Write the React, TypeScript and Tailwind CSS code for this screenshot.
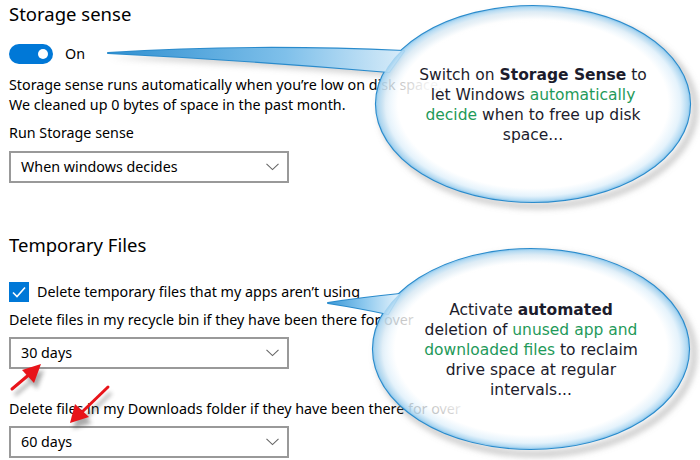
import React from "react";

function Chevron() {
  return (
    <svg width="13" height="8" viewBox="0 0 13 8" className="shrink-0">
      <path d="M0.5 0.8 L6.5 6.6 L12.5 0.8" fill="none" stroke="#666" strokeWidth="1.1" />
    </svg>
  );
}

function Dropdown({ label }: { label: string }) {
  return (
    <div className="w-[280px] h-[32px] border-2 border-[#999] bg-white flex items-center justify-between pl-[10px] pr-[8px]">
      <span className="text-[14.3px] text-black leading-none">{label}</span>
      <Chevron />
    </div>
  );
}

function Overlay() {
  return (
    <svg className="absolute left-0 top-0 pointer-events-none" width="700" height="460" viewBox="0 0 700 460">
      <defs>
        <radialGradient id="bfill" cx="0.5" cy="0.5" r="0.5">
          <stop offset="0" stopColor="#ffffff" stopOpacity="1" />
          <stop offset="0.7" stopColor="#ffffff" stopOpacity="0.95" />
          <stop offset="0.86" stopColor="#ffffff" stopOpacity="0.78" />
          <stop offset="0.94" stopColor="#dff0fb" stopOpacity="0.82" />
          <stop offset="1" stopColor="#9ccfef" stopOpacity="0.95" />
        </radialGradient>
        <linearGradient id="tail1" x1="0" y1="0" x2="1" y2="0">
          <stop offset="0" stopColor="#2f8fd0" />
          <stop offset="0.6" stopColor="#7fc0ea" />
          <stop offset="1" stopColor="#d8ecf9" />
        </linearGradient>
        <linearGradient id="tail2" x1="0" y1="0" x2="1" y2="0">
          <stop offset="0" stopColor="#3b98d6" />
          <stop offset="0.5" stopColor="#8cc8ee" />
          <stop offset="1" stopColor="#e6f3fc" />
        </linearGradient>
        <filter id="blur" x="-20%" y="-20%" width="140%" height="140%">
          <feGaussianBlur stdDeviation="3" />
        </filter>
        <filter id="ablur" x="-50%" y="-50%" width="200%" height="200%">
          <feGaussianBlur stdDeviation="2" />
        </filter>
      </defs>

      {/* Bubble 1 */}
      <ellipse cx="538" cy="109" rx="157" ry="97" fill="none" stroke="#888" strokeOpacity="0.55" strokeWidth="5" filter="url(#blur)" />
      <path d="M108 53 Q250 44 402 51 L392 72 Q250 60 108 53 Z" fill="#888" opacity="0.35" transform="translate(2,5)" filter="url(#blur)" />
      <path d="M108 53 Q250 44 404 51 L389 72 Q250 60 108 53 Z" fill="none" stroke="#2a8bcc" strokeWidth="2.2" strokeLinejoin="round" />
      <ellipse cx="533" cy="104" rx="157" ry="98" fill="none" stroke="#2a8bcc" strokeWidth="2.2" />
      <path d="M108 53 Q250 44 404 51 L389 72 Q250 60 108 53 Z" fill="url(#tail1)" />
      <ellipse cx="533" cy="104" rx="157" ry="98" fill="url(#bfill)" />

      {/* Bubble 2 */}
      <ellipse cx="536" cy="354" rx="158" ry="100" fill="none" stroke="#888" strokeOpacity="0.55" strokeWidth="5" filter="url(#blur)" />
      <path d="M328 303 Q360 298 400 294 L388 314 Q360 308 328 303 Z" fill="none" stroke="#2a8bcc" strokeWidth="2.2" strokeLinejoin="round" />
      <ellipse cx="531" cy="349" rx="158" ry="100" fill="none" stroke="#2a8bcc" strokeWidth="2.2" />
      <path d="M328 303 Q360 298 400 294 L388 314 Q360 308 328 303 Z" fill="url(#tail2)" />
      <ellipse cx="531" cy="349" rx="158" ry="100" fill="url(#bfill)" />

      {/* Red arrows */}
      <g opacity="0.45" transform="translate(3,6)" filter="url(#ablur)">
        <path d="M12 389 L31 373" stroke="#444" strokeWidth="3" />
        <path d="M41 364 L22 370 L34 383 Z" fill="#444" />
        <path d="M108 387 L81 413" stroke="#444" strokeWidth="3" />
        <path d="M70 423 L75 404 L89 417 Z" fill="#444" />
      </g>
      <path d="M12 389 L31 373" stroke="#e8141a" strokeWidth="3" strokeLinecap="round" />
      <path d="M41 364 L22 370 L34 383 Z" fill="#e8141a" />
      <path d="M108 387 L81 413" stroke="#e8141a" strokeWidth="3" strokeLinecap="round" />
      <path d="M70 423 L75 404 L89 417 Z" fill="#e8141a" />
    </svg>
  );
}

export default function App() {
  const bubbleText = "text-[15.5px] leading-[20px] text-[#1c1c2c] text-center font-['DejaVu_Sans',sans-serif]";
  return (
    <div className="relative w-[700px] h-[460px] bg-white overflow-hidden font-['Noto_Sans','Open_Sans',sans-serif] text-black">
      <div className="flex flex-col pl-[9px]">
        <div className="h-[28px] flex items-center text-[18.5px] leading-none">Storage sense</div>
        <div className="mt-[16px] h-[20px] flex items-center gap-[12px]">
          <div className="w-[44px] h-[20px] rounded-full bg-[#0078d7] flex items-center justify-end pr-[5px]">
            <div className="w-[10px] h-[10px] rounded-full bg-white" />
          </div>
          <span className="text-[14.3px] leading-none">On</span>
        </div>
        <div className="mt-[11px] text-[14.3px] leading-[20px]">
          <div>Storage sense runs automatically when you’re low on disk space.</div>
          <div>We cleaned up 0 bytes of space in the past month.</div>
        </div>
        <div className="mt-[8px] text-[14.3px] leading-[20px]">Run Storage sense</div>
        <div className="mt-[8px]">
          <Dropdown label="When windows decides" />
        </div>

        <div className="mt-[48px] h-[28px] flex items-center text-[18.5px] leading-none">Temporary Files</div>
        <div className="mt-[23px] h-[20px] flex items-center gap-[8px]">
          <div className="w-[20px] h-[20px] bg-[#0078d7] flex items-center justify-center">
            <svg width="14" height="12" viewBox="0 0 14 12">
              <path d="M1 6.5 L5 10.5 L13 1.5" fill="none" stroke="#fff" strokeWidth="1.6" />
            </svg>
          </div>
          <span className="text-[14.3px] leading-none">Delete temporary files that my apps aren’t using</span>
        </div>
        <div className="mt-[8px] text-[14.3px] leading-[20px]">Delete files in my recycle bin if they have been there for over</div>
        <div className="mt-[7px]">
          <Dropdown label="30 days" />
        </div>
        <div className="mt-[30px] text-[14.3px] leading-[20px]">Delete files in my Downloads folder if they have been there for over</div>
        <div className="mt-[7px]">
          <Dropdown label="60 days" />
        </div>
      </div>

      <Overlay />

      <div className={`absolute left-[381px] top-[65px] w-[304px] ${bubbleText}`}>
        <div>Switch on <span className="font-bold">Storage Sense</span> to</div>
        <div>let Windows <span className="text-[#1f9a5a]">automatically</span></div>
        <div><span className="text-[#1f9a5a]">decide</span> when to free up disk</div>
        <div>space...</div>
      </div>

      <div className={`absolute left-[379px] top-[300px] w-[304px] ${bubbleText}`}>
        <div>Activate <span className="font-bold">automated</span></div>
        <div>deletion of <span className="text-[#1f9a5a]">unused app and</span></div>
        <div><span className="text-[#1f9a5a]">downloaded files</span> to reclaim</div>
        <div>drive space at regular</div>
        <div>intervals...</div>
      </div>
    </div>
  );
}
